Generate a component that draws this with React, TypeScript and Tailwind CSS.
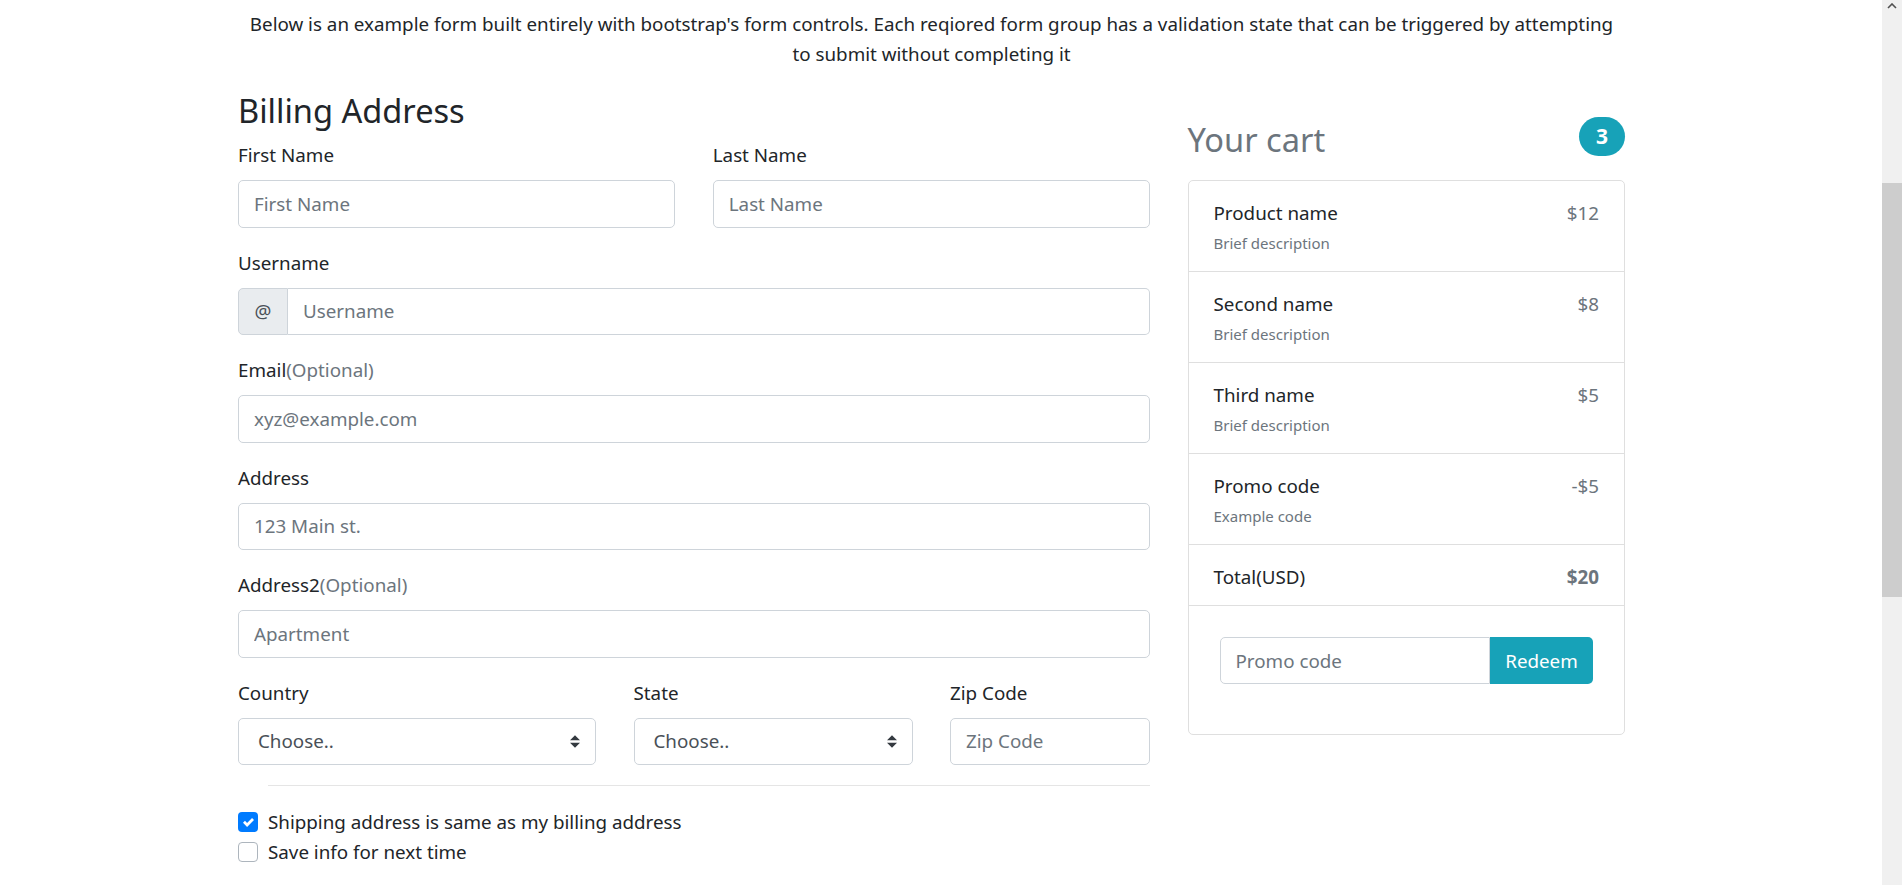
type CartItem = {
  name: string
  desc: string
  price: string
}

const cartItems: CartItem[] = [
  { name: "Product name", desc: "Brief description", price: "$12" },
  { name: "Second name", desc: "Brief description", price: "$8" },
  { name: "Third name", desc: "Brief description", price: "$5" },
  { name: "Promo code", desc: "Example code", price: "-$5" },
]

function SelectArrows() {
  return (
    <svg width="10" height="13" viewBox="0 0 4 5" className="shrink-0">
      <path d="M2 0L0 2h4zm0 5L0 3h4z" fill="#343a40" />
    </svg>
  )
}

function Field({ label, optional, placeholder }: { label: string; optional?: boolean; placeholder: string }) {
  return (
    <div className="mb-[20px]">
      <label className="mb-[10px] block leading-[30px]">
        {label}
        {optional && <span className="text-[#6c757d]">(Optional)</span>}
      </label>
      <input
        placeholder={placeholder}
        className="h-[47.5px] w-full rounded-[5px] border border-[#ced4da] bg-white px-[15px] text-[#495057] outline-none placeholder:text-[#6c757d]"
      />
    </div>
  )
}

function Select({ label }: { label: string }) {
  return (
    <div className="mb-[20px]">
      <label className="mb-[10px] block leading-[30px]">{label}</label>
      <div className="flex h-[47.5px] items-center justify-between rounded-[5px] border border-[#ced4da] bg-white pl-[19px] pr-[15px] text-[#495057]">
        <span>Choose..</span>
        <SelectArrows />
      </div>
    </div>
  )
}

function Check({ checked, label }: { checked?: boolean; label: string }) {
  return (
    <div className="flex h-[30px] items-center gap-[10px]">
      {checked ? (
        <span className="flex h-[20px] w-[20px] items-center justify-center rounded-[4px] bg-[#007bff]">
          <svg width="11" height="11" viewBox="0 0 8 8">
            <path d="M6.564.75l-3.59 3.612-1.538-1.55L0 4.26l2.974 2.99L8 2.193z" fill="#fff" />
          </svg>
        </span>
      ) : (
        <span className="h-[20px] w-[20px] rounded-[4px] border border-[#adb5bd] bg-white" />
      )}
      <span>{label}</span>
    </div>
  )
}

export default function App() {
  return (
    <div className="flex h-[885px] w-full overflow-hidden bg-white font-['Noto_Sans',sans-serif] text-[18.8px] leading-[30px] text-[#212529]">
      {/* Page */}
      <div className="flex-1 pl-[238px]">
        <div className="w-[1387px]">
          <p className="mb-[24px] pt-[9px] text-center">
            Below is an example form built entirely with bootstrap's form controls. Each reqiored form group has a
            validation state that can be triggered by attempting
            <br />
            to submit without completing it
          </p>

          <div className="flex gap-[37.5px]">
            {/* Billing form */}
            <div className="w-[912px]">
              <h4 className="mb-[11px] text-[32.6px] font-normal leading-[36px]">Billing Address</h4>

              <div className="grid grid-cols-2 gap-x-[37.5px]">
                <Field label="First Name" placeholder="First Name" />
                <Field label="Last Name" placeholder="Last Name" />
              </div>

              <div className="mb-[20px]">
                <label className="mb-[10px] block leading-[30px]">Username</label>
                <div className="flex h-[47.5px]">
                  <span className="flex w-[50px] items-center justify-center rounded-l-[5px] border border-[#ced4da] bg-[#e9ecef] text-[#495057]">
                    @
                  </span>
                  <input
                    placeholder="Username"
                    className="flex-1 rounded-r-[5px] border border-l-0 border-[#ced4da] bg-white px-[15px] text-[#495057] outline-none placeholder:text-[#6c757d]"
                  />
                </div>
              </div>

              <Field label="Email" optional placeholder="xyz@example.com" />
              <Field label="Address" placeholder="123 Main st." />
              <Field label="Address2" optional placeholder="Apartment" />

              <div className="grid grid-cols-[358px_279px_200px] gap-x-[37.5px]">
                <Select label="Country" />
                <Select label="State" />
                <Field label="Zip Code" placeholder="Zip Code" />
              </div>

              <hr className="ml-[30px] border-t border-[#e5e5e5]" />

              <div className="mt-[21px]">
                <Check checked label="Shipping address is same as my billing address" />
                <Check label="Save info for next time" />
              </div>
            </div>

            {/* Cart */}
            <div className="w-[437.5px] pt-[24px]">
              <div className="mb-[24px] flex h-[39px] items-center justify-between">
                <h4 className="pt-[7px] text-[32.6px] leading-[36px] text-[#6c757d]">Your cart</h4>
                <span className="flex h-[39px] w-[46px] items-center justify-center rounded-full bg-[#17a2b8] text-[21px] font-bold leading-none text-white">
                  3
                </span>
              </div>

              <div className="rounded-[5px] border border-[#dfdfdf]">
                {cartItems.map((item) => (
                  <div key={item.name} className="flex justify-between border-b border-[#dfdfdf] px-[25px] pb-[16px] pt-[20px]">
                    <div>
                      <h6 className="font-normal leading-[24px]">{item.name}</h6>
                      <small className="mt-[6px] block text-[15px] leading-[24px] text-[#6c757d]">{item.desc}</small>
                    </div>
                    <span className="leading-[24px] text-[#6c757d]">{item.price}</span>
                  </div>
                ))}
                <div className="flex justify-between border-b border-[#dfdfdf] px-[25px] pb-[13px] pt-[17px]">
                  <span>Total(USD)</span>
                  <strong className="text-[#6c757d]">$20</strong>
                </div>
                <div className="px-[31px] pb-[50px] pt-[31px]">
                  <div className="flex h-[47px]">
                    <input
                      placeholder="Promo code"
                      className="min-w-0 flex-1 rounded-l-[5px] border border-[#ced4da] bg-white px-[15px] text-[#495057] outline-none placeholder:text-[#6c757d]"
                    />
                    <button className="w-[103px] rounded-r-[5px] bg-[#17a2b8] text-white">Redeem</button>
                  </div>
                </div>
              </div>
            </div>
          </div>
        </div>
      </div>

      {/* Scrollbar */}
      <div className="flex w-[20px] shrink-0 flex-col items-center bg-[#f0f0f0]">
        <svg width="10" height="6" viewBox="0 0 10 6" className="mt-[3px]">
          <path d="M1 5l4-4 4 4" fill="none" stroke="#505050" strokeWidth="1.6" />
        </svg>
        <div className="mt-[174px] h-[414px] w-full bg-[#cdcdcd]" />
      </div>
    </div>
  )
}
